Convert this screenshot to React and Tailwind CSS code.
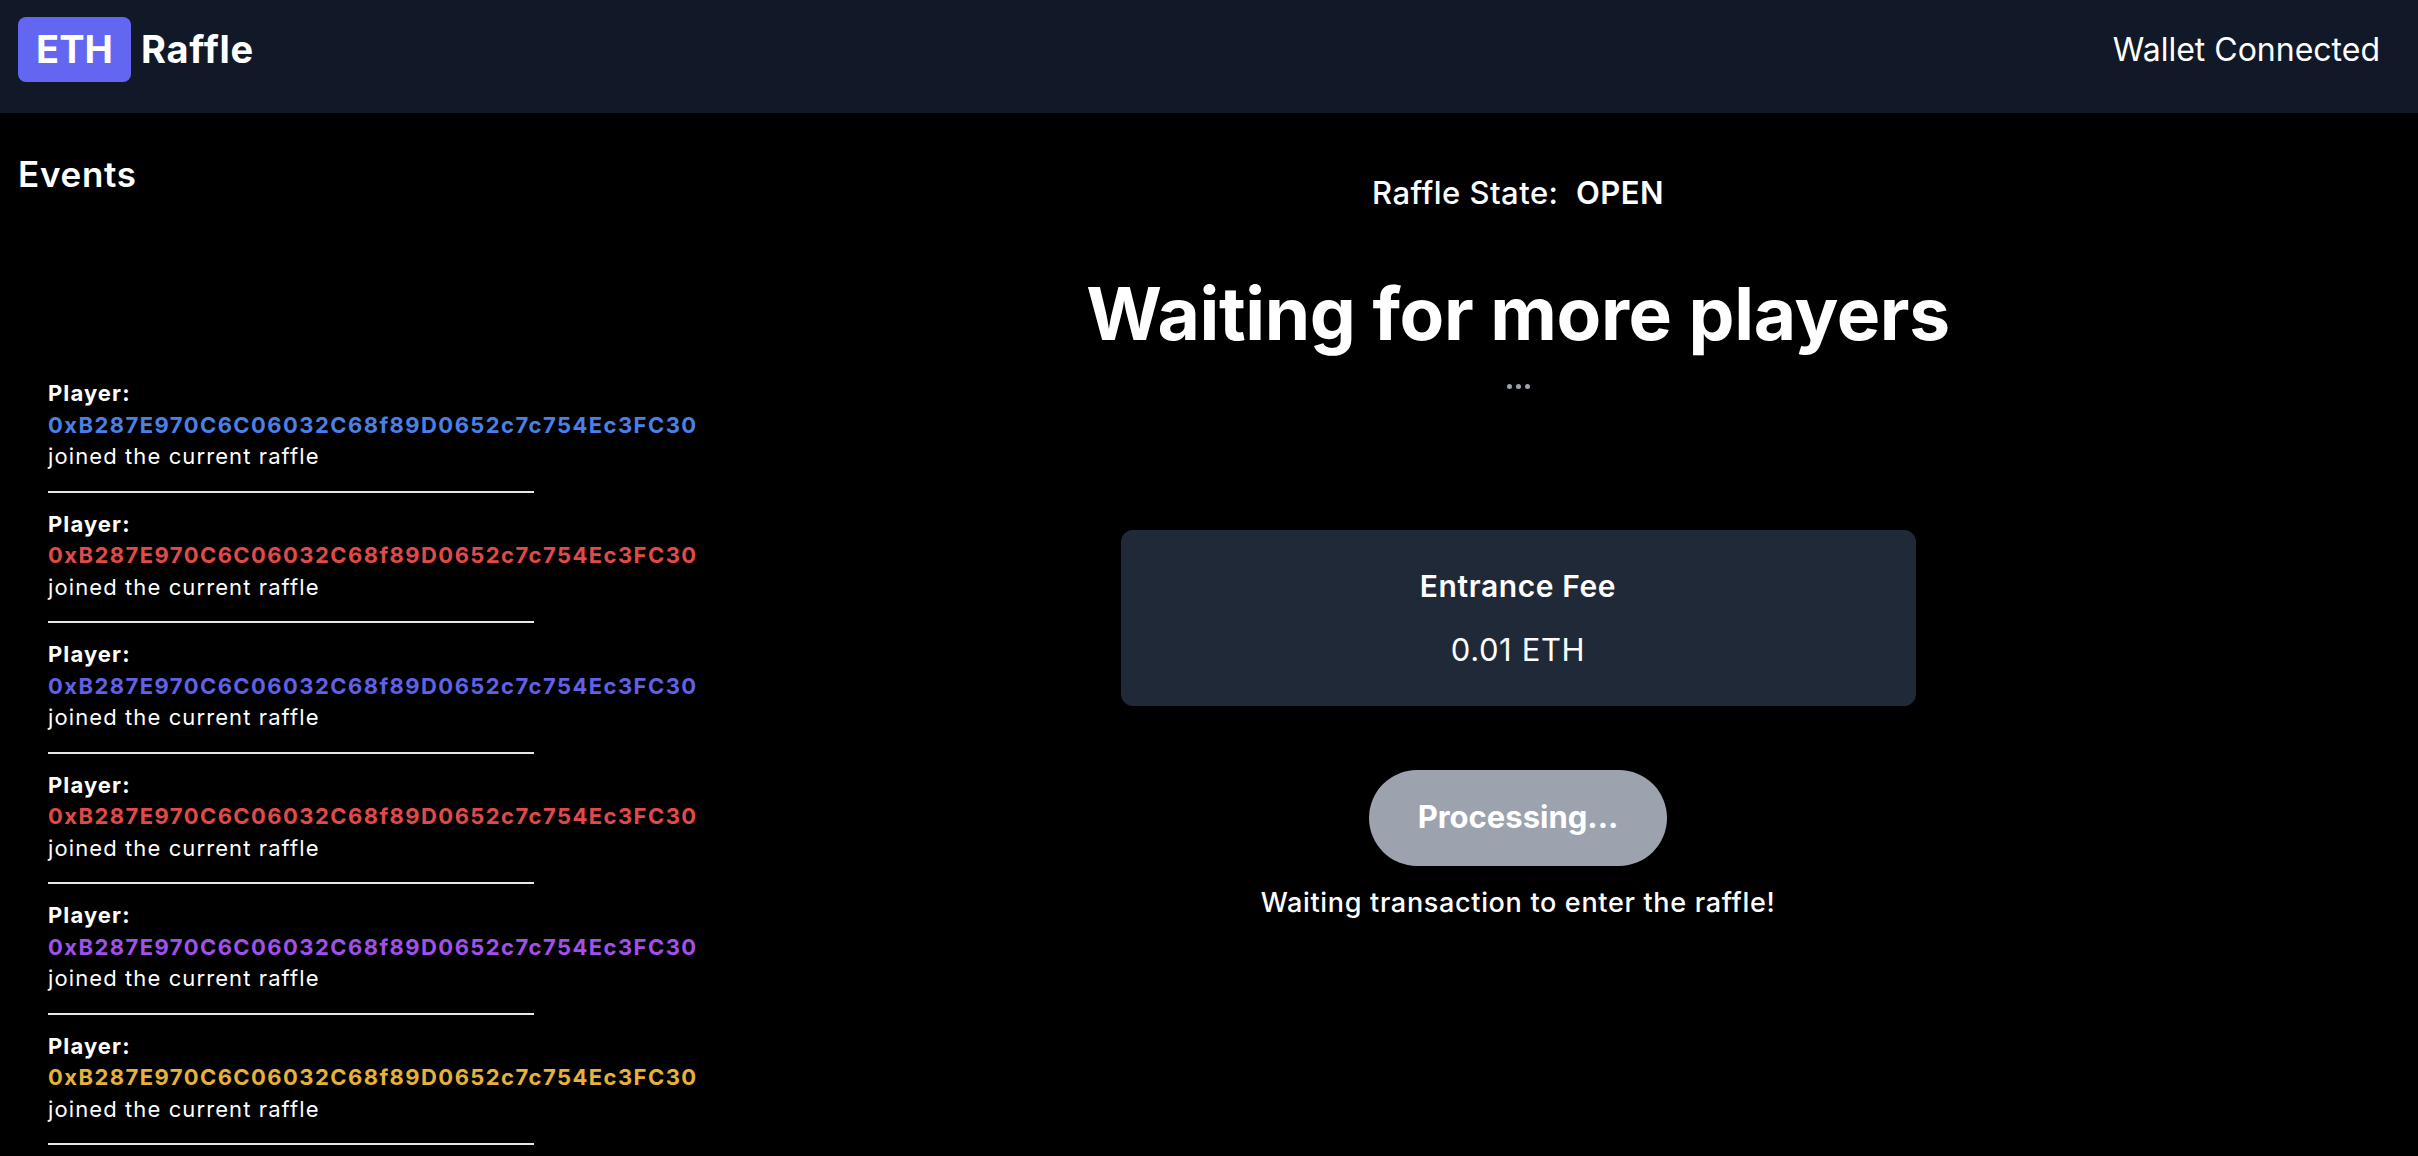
import React from "react";

const ADDRESS = "0xB287E970C6C06032C68f89D0652c7c754Ec3FC30";

const players = [
  { id: 1, color: "text-[#4a80e8]" },
  { id: 2, color: "text-[#e04a4a]" },
  { id: 3, color: "text-[#6160e6]" },
  { id: 4, color: "text-[#e04a4a]" },
  { id: 5, color: "text-[#a150ec]" },
  { id: 6, color: "text-[#e6b23a]" },
];

const PlayerEvent = ({ color }) => (
  <li className="pb-[18px] mb-[16px] border-b-2 border-[#e5e7eb] w-[486px] text-[22px] leading-[31.5px] tracking-[0.05em]">
    <div className="font-bold">Player:</div>
    <div className={`font-bold whitespace-nowrap tracking-[0.065em] ${color}`}>{ADDRESS}</div>
    <div>joined the current raffle</div>
  </li>
);

export default function App() {
  return (
    <div
      className="h-screen overflow-hidden bg-black text-white"
      style={{ fontFamily: "Inter, 'Noto Sans', sans-serif" }}
    >
      <header className="h-[113px] bg-[#111827] flex justify-between items-start px-[18px] pt-[17px]">
        <div className="flex items-center gap-[10px]">
          <span className="h-[65px] w-[113px] rounded-[8px] bg-[#6366f1] flex items-center justify-center text-[38px] font-bold">
            ETH
          </span>
          <span className="text-[38px] font-bold tracking-[0.02em]">Raffle</span>
        </div>
        <div className="h-[65px] flex items-center pr-[20px] text-[32px]">Wallet Connected</div>
      </header>

      <main className="flex">
        <aside className="w-[618px] shrink-0 pl-[18px] pt-[41px]">
          <h2 className="text-[35px] leading-[40px] font-semibold tracking-[0.02em]">Events</h2>
          <ul className="mt-[184px] pl-[30px]">
            {players.map((p) => (
              <PlayerEvent key={p.id} color={p.color} />
            ))}
          </ul>
        </aside>

        <section className="flex-1 flex flex-col items-center pt-[57px]">
          <div className="text-[31px] leading-[46.5px] font-medium whitespace-pre tracking-[0.015em]">
            Raffle State:  <span className="font-semibold">OPEN</span>
          </div>
          <h1 className="mt-[60px] text-[73px] leading-[73px] font-bold tracking-[-0.005em]">
            Waiting for more players
          </h1>
          <div className="mt-[34px] flex gap-[4px]">
            <span className="w-[5px] h-[5px] rounded-full bg-[#9ca3af]" />
            <span className="w-[5px] h-[5px] rounded-full bg-[#9ca3af]" />
            <span className="w-[5px] h-[5px] rounded-full bg-[#9ca3af]" />
          </div>

          <div className="mt-[141px] w-[795px] h-[176px] rounded-[12px] bg-[#1f2937] flex flex-col items-center pt-[35px]">
            <div className="text-[30px] leading-[43.5px] font-semibold tracking-[0.02em]">Entrance Fee</div>
            <div className="mt-[19px] text-[31px] leading-[45px] tracking-[0.02em]">0.01 ETH</div>
          </div>

          <button className="mt-[64px] w-[298px] h-[96px] rounded-full bg-[#9ca3af] text-white text-[31px] font-bold">
            Processing...
          </button>
          <p className="mt-[17px] text-[27px] leading-[39px] font-medium tracking-[0.025em]">
            Waiting transaction to enter the raffle!
          </p>
        </section>
      </main>
    </div>
  );
}
